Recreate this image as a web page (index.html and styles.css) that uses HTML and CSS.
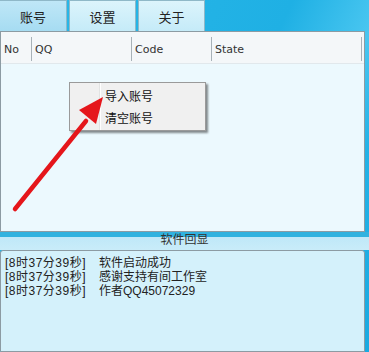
FILE: index.html
```html
<!DOCTYPE html>
<html lang="zh-CN">

<head>
    <meta charset="UTF-8">
    <title>账号</title>
    <link rel="stylesheet" href="styles.css">
</head>

<body>
    <div class="window">
        <div class="tabs">
            <div class="tab active">账号</div>
            <div class="tab">设置</div>
            <div class="tab">关于</div>
        </div>

        <div class="list">
            <div class="list-head">
                <div class="col col-no">No</div>
                <div class="col col-qq">QQ</div>
                <div class="col col-code">Code</div>
                <div class="col col-state">State</div>
            </div>

            <div class="menu">
                <div class="menu-item">导入账号</div>
                <div class="menu-item">清空账号</div>
            </div>

            <svg class="arrow" width="120" height="130" viewBox="0 0 120 130">
                <line x1="15" y1="112" x2="86" y2="24" stroke="#e5161b" stroke-width="4.5" stroke-linecap="round" />
                <polygon points="103,0 79,13 96,27" fill="#e5161b" />
            </svg>
        </div>

        <div class="log-bar">
            <span class="log-title">软件回显</span>
        </div>

        <div class="log">
            <div class="log-line"><span class="time">[8时37分39秒]</span>软件启动成功</div>
            <div class="log-line"><span class="time">[8时37分39秒]</span>感谢支持有间工作室</div>
            <div class="log-line"><span class="time">[8时37分39秒]</span>作者QQ45072329</div>
        </div>
    </div>
</body>

</html>
```

FILE: styles.css
```css
body {
    margin: 0;
    font-family: "Liberation Sans", "Noto Sans CJK SC", sans-serif;
    font-size: 12px;
    color: #222;
}

.window {
    width: 369px;
    height: 352px;
    overflow: hidden;
    background: linear-gradient(115deg, #2bb8e8 0%, #1fb0e4 55%, #49c6f0 72%, #23b2e6 82%, #1aa9e0 100%);
    display: flex;
    flex-direction: column;
}

.tabs {
    display: flex;
    gap: 2px;
    height: 31px;
}

.tab {
    width: 67px;
    display: flex;
    justify-content: center;
    align-items: center;
    border: 1px solid #8fb8c8;
    border-bottom: none;
    background: linear-gradient(#dcf4fc, #c5ebf8);
    box-sizing: border-box;
    font-size: 13px;
}

.tab.active {
    border-left: none;
    background: linear-gradient(#bfe7f7, #a6dcf2);
}

.list {
    position: relative;
    width: 365px;
    height: 201px;
    box-sizing: border-box;
    border: 1px solid #8c9ba3;
    background-color: #ecf9fe;
}

.list-head {
    display: flex;
    height: 31px;
    background-color: #f4f7f9;
    border-bottom: 1px solid #e1e8ec;
    font-family: "DejaVu Sans", sans-serif;
    font-size: 11px;
    color: #333;
}

.col {
    display: flex;
    align-items: center;
    padding-left: 3px;
    border-right: 1px solid #a8b2b8;
    margin: 5px 0 2px;
}

.col-no {
    width: 27px;
}

.col-qq {
    width: 96px;
}

.col-code {
    width: 76px;
}

.col-state {
    width: 146px;
}

.menu {
    position: absolute;
    left: 68px;
    top: 50px;
    width: 137px;
    height: 49px;
    box-sizing: border-box;
    border: 1px solid #9a9a9a;
    background: linear-gradient(to right, #f0f0f0 29px, #e2e3e3 29px, #e2e3e3 30px, #ffffff 30px, #ffffff 31px, #f0f0f0 31px);
    box-shadow: 2px 2px 2px rgba(0, 0, 0, 0.45);
    padding-top: 3px;
}

.menu-item {
    height: 22px;
    line-height: 22px;
    padding-left: 35px;
    color: #111;
}

.arrow {
    position: absolute;
    left: -1px;
    top: 65px;
}

.log-bar {
    position: relative;
    height: 18px;
    background: linear-gradient(#30b2df 0px, #30b2df 5px, #bfe8f8 5px, #c9ecf9 18px);
    display: flex;
    justify-content: center;
}

.log-title {
    margin-top: 1px;
    padding: 0 2px;
    line-height: 14px;
    color: #333;
}

.log {
    flex: 1;
    width: 365px;
    box-sizing: border-box;
    border: 1px solid #8c9ba3;
    border-top-left-radius: 3px;
    border-top-right-radius: 3px;
    background-color: #d4f1fb;
    padding: 5px 4px;
}

.log-line {
    height: 14px;
    line-height: 14px;
    display: flex;
    color: #222;
}

.time {
    width: 94px;
    letter-spacing: 0.5px;
}
```
